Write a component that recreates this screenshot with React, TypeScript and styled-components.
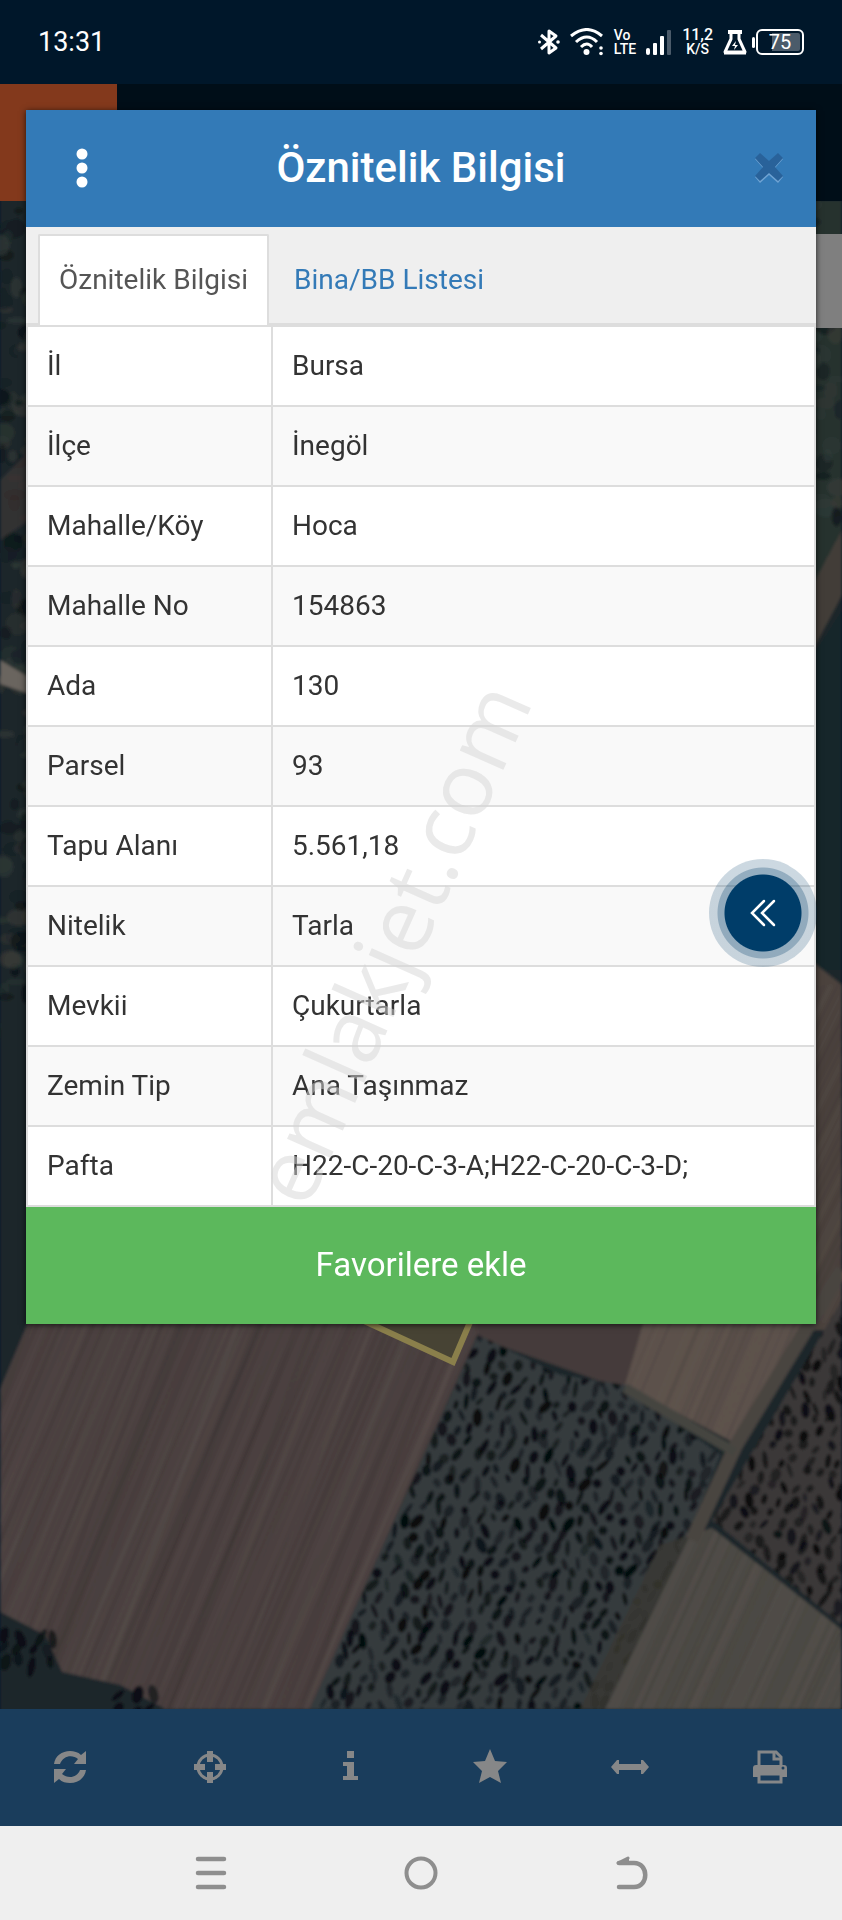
import styled, { createGlobalStyle } from "styled-components";

const GlobalStyle = createGlobalStyle`
  * {
    box-sizing: border-box;
  }

  body {
    margin: 0;
    background: #00172a;
    font-family: Roboto, "Liberation Sans", sans-serif;
    color: #333;
  }

  button {
    padding: 0;
    border: 0;
    background: none;
    font: inherit;
    color: inherit;
    cursor: pointer;
  }

  svg {
    display: block;
  }
`;

const rows = [
  ["İl", "Bursa"],
  ["İlçe", "İnegöl"],
  ["Mahalle/Köy", "Hoca"],
  ["Mahalle No", "154863"],
  ["Ada", "130"],
  ["Parsel", "93"],
  ["Tapu Alanı", "5.561,18"],
  ["Nitelik", "Tarla"],
  ["Mevkii", "Çukurtarla"],
  ["Zemin Tip", "Ana Taşınmaz"],
  ["Pafta", "H22-C-20-C-3-A;H22-C-20-C-3-D;"],
];

// small seeded generator so the map texture is the same on each render
const makeRandom = (seed: number) => {
  let s = seed;
  return () => {
    s = (s * 16807) % 2147483647;
    return s / 2147483647;
  };
};

const treeRows = (
  seed: number,
  x0: number,
  x1: number,
  y0: number,
  y1: number,
  slope: number,
  size: number
) => {
  const rnd = makeRandom(seed);
  const trees = [];
  for (let x = x0; x < x1; x += 15) {
    for (let y = y0; y < y1; y += 13) {
      const cx = x - (y - y0) * slope + rnd() * 7;
      const cy = y + rnd() * 9;
      trees.push(
        <ellipse
          key={`${x}-${y}`}
          cx={cx}
          cy={cy}
          rx={size * (0.4 + rnd() * 0.6)}
          ry={size * (0.8 + rnd() * 1.1)}
          opacity={0.35 + rnd() * 0.65}
          transform={`rotate(${rnd() * 80 - 30} ${cx} ${cy})`}
        />
      );
    }
  }
  return trees;
};

const furrows = (
  seed: number,
  x0: number,
  x1: number,
  y0: number,
  y1: number,
  slope: number,
  step: number
) => {
  const rnd = makeRandom(seed);
  const lines = [];
  for (let x = x0; x < x1; x += step) {
    const dx = (y1 - y0) * slope;
    lines.push(
      <path
        key={x}
        d={`M${x} ${y0} L${x - dx} ${y1}`}
        stroke={rnd() > 0.5 ? "#6d625c" : "#2b2625"}
        strokeWidth={1 + rnd() * step * 0.5}
        opacity={0.06 + rnd() * 0.14}
      />
    );
  }
  return lines;
};

const blotches = (seed: number, x0: number, x1: number, y0: number, y1: number, count: number) => {
  const rnd = makeRandom(seed);
  const colors = ["#0c1418", "#3a3a36", "#141f26", "#2f3a36"];
  return Array.from({ length: count }, (_, i) => (
    <ellipse
      key={i}
      cx={x0 + rnd() * (x1 - x0)}
      cy={y0 + rnd() * (y1 - y0)}
      rx={4 + rnd() * 8}
      ry={3 + rnd() * 8}
      fill={colors[Math.floor(rnd() * 4)]}
      opacity={0.35 + rnd() * 0.4}
    />
  ));
};

const SatelliteMap = () => (
  <MapDrawing viewBox="0 201 842 1508" preserveAspectRatio="xMidYMid slice" aria-hidden="true">
    <defs>
      <filter id="soft" x="0" y="0" width="100%" height="100%">
        <feGaussianBlur stdDeviation="1.4" />
      </filter>
      <clipPath id="plough">
        <path d="M30 1200 H540 L475 1340 L310 1709 H165 L120 1685 L62 1672 L45 1635 L0 1612 V1390 L30 1318Z" />
      </clipPath>
      <clipPath id="orchard">
        <path d="M478 1335 L560 1375 L625 1385 L720 1455 L688 1535 L605 1709 H310Z" />
      </clipPath>
      <clipPath id="east">
        <path d="M842 1300 L712 1520 L842 1625Z" />
      </clipPath>
      <clipPath id="pale">
        <path d="M650 1300 L830 1300 L738 1445 L625 1385Z" />
      </clipPath>
      <clipPath id="south">
        <path d="M690 1535 L712 1528 L842 1630 V1709 H605Z" />
      </clipPath>
    </defs>
    <g filter="url(#soft)">
      <rect x="0" y="190" width="842" height="1530" fill="#1d272a" />
      <g>{blotches(7, 0, 40, 210, 1060, 150)}</g>
      <path d="M0 480 L30 450 V520 L0 540Z" fill="#3d3533" opacity=".7" />
      <path d="M0 660 L30 678 V694 L0 684Z" fill="#6b655f" />
      <path d="M0 1010 H30 V1330 H0Z" fill="#1d262b" />

      <path d="M810 201 H842 V530 L810 600Z" fill="#26332f" />
      <g>{blotches(19, 810, 842, 201, 520, 40)}</g>
      <path d="M842 530 L810 590 V655 L842 595Z" fill="#423c38" />
      <path d="M842 610 L810 660 V970 H842Z" fill="#19272b" />
      <path d="M810 960 L842 985 V1330 H810Z" fill="#4b423e" />
      <g>{furrows(5, 810, 1000, 985, 1323, 0.5, 7)}</g>

      <path d="M30 1200 H540 L475 1340 L310 1709 H165 L120 1685 L62 1672 L45 1635 L0 1612 V1390 L30 1318Z" fill="#4b4140" />
      <g clipPath="url(#plough)">
        {furrows(11, 0, 700, 1300, 1709, 0.43, 8)}
        {furrows(31, 20, 700, 1300, 1709, 0.38, 19)}
      </g>

      <path d="M475 1300 H660 L625 1390 L478 1338Z" fill="#443b3a" />
      <path d="M478 1335 L560 1375 L625 1385 L720 1455 L688 1535 L605 1709 H310Z" fill="#343b3e" />
      <g clipPath="url(#orchard)" fill="#05090d">
        {treeRows(23, 478, 900, 1335, 1715, 0.44, 5)}
      </g>
      <path d="M690 1535 L605 1709 H580 L660 1545Z" fill="#3b3933" opacity=".8" />

      <path d="M650 1300 L830 1300 L738 1445 L625 1385Z" fill="#5c514b" />
      <g clipPath="url(#pale)">{furrows(41, 630, 900, 1300, 1450, 0.42, 5)}</g>

      <path d="M842 1300 L712 1520 L842 1625Z" fill="#3a3737" />
      <g clipPath="url(#east)" fill="#080a0c">
        {treeRows(53, 740, 1000, 1300, 1640, 0.44, 5)}
      </g>

      <path d="M690 1535 L712 1528 L842 1630 V1709 H605Z" fill="#4e4b46" />
      <g clipPath="url(#south)">{furrows(61, 640, 930, 1525, 1709, 0.46, 5)}</g>

      <path d="M842 1270 L736 1445 L692 1540" fill="none" stroke="#4a4440" strokeWidth="14" />
      <path d="M625 1388 L735 1452" stroke="#454540" strokeWidth="10" />

      <path d="M0 1612 L45 1635 L62 1672 L120 1685 L165 1709 H0Z" fill="#1a2529" />
      <g fill="#070d12">{treeRows(71, 4, 50, 1632, 1670, 0.2, 6)}</g>
      <g fill="#070d12">{treeRows(73, 118, 160, 1690, 1712, 0.2, 6)}</g>
    </g>
    <path d="M336 1308 L453 1362 L476 1308" fill="#474334" stroke="#8a7f4b" strokeWidth="6" />
  </MapDrawing>
);

const StatusIcons = () => (
  <Indicators>
    <svg width="22" height="28" viewBox="0 0 22 28" fill="none" stroke="#fff" strokeWidth="3">
      <path d="M3 7 L18 20 L11 25 V3 L18 8 L3 21" strokeLinejoin="round" />
      <circle cx="1.5" cy="14" r="1.5" fill="#fff" stroke="none" />
      <circle cx="20" cy="14" r="1.8" fill="#fff" stroke="none" />
    </svg>
    <svg width="34" height="28" viewBox="0 0 34 28" fill="none" stroke="#fff" strokeWidth="3">
      <path d="M1 8 Q17 -5 32 8" />
      <path d="M6 14 Q17 4 27 14" />
      <path d="M11 19 Q17 13 22 19" />
      <circle cx="16.5" cy="24" r="3" fill="#fff" stroke="none" />
      <circle cx="31" cy="20" r="1.8" fill="#fff" stroke="none" />
      <circle cx="31" cy="25.5" r="1.8" fill="#fff" stroke="none" />
    </svg>
    <Stacked>
      <span>Vo</span>
      <span>LTE</span>
    </Stacked>
    <svg width="26" height="28" viewBox="0 0 26 28" fill="#fff">
      <rect x="0" y="20" width="4" height="7" rx="2" />
      <rect x="7" y="15" width="4" height="12" rx="1" />
      <rect x="14" y="8" width="4" height="19" rx="1" />
      <rect x="21" y="2" width="4" height="25" rx="1" fill="#4b5b6a" />
    </svg>
    <Stacked>
      <strong>11,2</strong>
      <span>K/S</span>
    </Stacked>
    <svg width="24" height="28" viewBox="0 0 24 28" fill="none" stroke="#fff" strokeWidth="3">
      <path d="M5 4 H19" strokeWidth="4" />
      <path d="M8 5 V11 L2 24 H22 L16 11 V5" strokeLinejoin="round" />
      <path d="M1 25 H23" />
      <path d="M13 13 L9 18 H12 L11 22 L15 17 H12Z" fill="#fff" stroke="none" />
    </svg>
    <Battery>
      <BatteryBody>75</BatteryBody>
    </Battery>
  </Indicators>
);

const tools = [
  {
    label: "Yenile",
    icon: (
      <svg width="34" height="34" viewBox="0 0 34 34" fill="#868788">
        <path d="M1 14 C2 6 9 1 17 1 C21 1 25 2 28 5 L33 1 V14 H21 L25 9 C19 4 10 6 7 14Z" />
        <path d="M33 20 C32 28 25 33 17 33 C13 33 9 32 6 29 L1 33 V19 H13 L9 24 C15 29 24 28 27 20Z" />
      </svg>
    ),
  },
  {
    label: "Konum",
    icon: (
      <svg width="34" height="34" viewBox="0 0 34 34" fill="none" stroke="#868788">
        <circle cx="17" cy="17" r="12" strokeWidth="3" />
        <path d="M17 1 V12 M17 22 V33 M1 17 H12 M22 17 H33" strokeWidth="6" />
      </svg>
    ),
  },
  {
    label: "Bilgi",
    icon: (
      <svg width="34" height="34" viewBox="0 0 34 34" fill="#868788">
        <path d="M14 1 H21 V8 H14Z M10 12 H21 V26 H25 V30 H10 V26 H14 V16 H10Z" />
      </svg>
    ),
  },
  {
    label: "Favoriler",
    icon: (
      <svg width="36" height="36" viewBox="0 0 36 36" fill="#868788">
        <path d="M18 0 L23 12 L35 13 L26 22 L29 34 L18 28 L7 34 L10 22 L1 13 L13 12Z" />
      </svg>
    ),
  },
  {
    label: "Ölçüm",
    icon: (
      <svg width="38" height="34" viewBox="0 0 38 34" fill="#868788">
        <path d="M0 17 L6 10 H8 V14 H30 V10 H32 L38 17 L32 24 H30 V20 H8 V24 H6Z" />
      </svg>
    ),
  },
  {
    label: "Yazdır",
    icon: (
      <svg width="36" height="34" viewBox="0 0 36 34" fill="none" stroke="#868788" strokeWidth="3">
        <path d="M7 16 V2 H24 L29 7 V16" />
        <path d="M22 2 V9 H29" />
        <path d="M4 15 H32 Q35 15 35 18 V27 H29 V23 H7 V27 H1 V18 Q1 15 4 15Z" fill="#868788" stroke="none" />
        <rect x="7" y="24" width="22" height="8" fill="#1a3d5c" />
        <circle cx="31" cy="18" r="1.5" fill="#1a3d5c" stroke="none" />
      </svg>
    ),
  },
];

const App = () => (
  <>
    <GlobalStyle />
    <Screen>
      <StatusBar>
        <time>13:31</time>
        <StatusIcons />
      </StatusBar>

      <Shell>
        <Viewer>
          <TopBar>
            <TopBarBadge />
          </TopBar>
          <MapArea>
            <SatelliteMap />
            <MapControl type="button" aria-label="Katmanlar" />
          </MapArea>
          <Toolbar>
            {tools.map((tool) => (
              <button key={tool.label} type="button" aria-label={tool.label}>
                {tool.icon}
              </button>
            ))}
          </Toolbar>
        </Viewer>

        <Overlay>
          <Modal role="dialog" aria-labelledby="modal-title">
            <ModalHeader>
              <MenuButton type="button" aria-label="Menü">
                <svg width="12" height="40" viewBox="0 0 12 40" fill="#fff">
                  <circle cx="6" cy="6" r="5.5" />
                  <circle cx="6" cy="20" r="5.5" />
                  <circle cx="6" cy="34" r="5.5" />
                </svg>
              </MenuButton>
              <Title id="modal-title">Öznitelik Bilgisi</Title>
              <CloseButton type="button" aria-label="Kapat">
                <svg width="30" height="32" viewBox="0 0 30 32">
                  <path d="M6 2 L15 10 L24 2 L29 7 L21 16 L29 25 L24 31 L15 23 L6 31 L1 25 L9 16 L1 7Z" fill="#6fa3d3" />
                  <path d="M6 1 L15 9 L24 1 L29 6 L21 15 L29 24 L24 29 L15 21 L6 29 L1 24 L9 15 L1 6Z" fill="#29629a" />
                </svg>
              </CloseButton>
            </ModalHeader>

            <Tabs role="tablist">
              <Tab type="button" role="tab" aria-selected="true" $active>
                Öznitelik Bilgisi
              </Tab>
              <Tab type="button" role="tab" aria-selected="false">
                Bina/BB Listesi
              </Tab>
            </Tabs>

            <TableArea>
              <Table>
                <tbody>
                  {rows.map(([name, value]) => (
                    <tr key={name}>
                      <th scope="row">{name}</th>
                      <td>{value}</td>
                    </tr>
                  ))}
                </tbody>
              </Table>
              <Watermark>emlakjet.com</Watermark>
            </TableArea>

            <FavoriteButton type="button">Favorilere ekle</FavoriteButton>
          </Modal>
        </Overlay>
      </Shell>

      <NavBar>
        <button type="button" aria-label="Son uygulamalar">
          <svg width="32" height="34" viewBox="0 0 32 34" stroke="#8e8e8e" strokeWidth="4.5" strokeLinecap="round">
            <path d="M3 3 H29 M3 17 H29 M3 31 H29" />
          </svg>
        </button>
        <button type="button" aria-label="Ana ekran">
          <svg width="34" height="34" viewBox="0 0 34 34" fill="none" stroke="#8e8e8e" strokeWidth="4">
            <circle cx="17" cy="17" r="14.5" />
          </svg>
        </button>
        <button type="button" aria-label="Geri">
          <svg width="34" height="34" viewBox="0 0 34 34" fill="none" stroke="#8e8e8e" strokeWidth="4.5" strokeLinecap="round">
            <path d="M4 7 H19 C34 7 34 31 19 31 H4" />
            <path d="M3 7 L13 2" strokeWidth="3" />
            <path d="M3 7 L14 1 V8Z" fill="#8e8e8e" stroke="none" />
          </svg>
        </button>
      </NavBar>

      <FloatingButton type="button" aria-label="Aç">
        <svg width="26" height="28" viewBox="0 0 26 28" fill="none" stroke="#fff" strokeWidth="2.5" strokeLinecap="round">
          <path d="M14 2 L2 14 L14 26" />
          <path d="M24 2 L12 14 L24 26" />
        </svg>
      </FloatingButton>
    </Screen>
  </>
);

export default App;

const Screen = styled.div`
  position: relative;
  display: flex;
  flex-direction: column;
  min-height: 100vh;
`;

const StatusBar = styled.header`
  display: flex;
  align-items: center;
  justify-content: space-between;
  height: 84px;
  padding: 0 38px;
  background: #00172a;
  color: #fff;
  font-size: 27px;
`;

const Indicators = styled.div`
  display: flex;
  align-items: center;
  gap: 10px;
`;

const Stacked = styled.div`
  display: flex;
  flex-direction: column;
  align-items: center;
  font-size: 14px;
  font-weight: 500;
  line-height: 14px;

  span:first-child {
    align-self: flex-start;
  }

  strong {
    font-size: 16px;
    font-weight: 500;
  }
`;

const Battery = styled.div`
  display: flex;
  align-items: center;
  gap: 1px;
  margin-left: -5px;

  &::before {
    content: "";
    width: 3px;
    height: 11px;
    border-radius: 2px;
    background: #fff;
  }
`;

const BatteryBody = styled.span`
  width: 48px;
  height: 26px;
  border: 2px solid #fff;
  border-radius: 6px;
  background: linear-gradient(to right, transparent 12px, #4b5b6a 12px) content-box;
  padding: 2px;
  font-size: 20px;
  line-height: 18px;
  text-align: center;
`;

/* the viewer and the dialog share one grid cell, the dialog on top */
const Shell = styled.main`
  flex: 1;
  display: grid;
  grid-template-columns: minmax(0, 1fr);

  > * {
    grid-area: 1 / 1;
  }
`;

const Viewer = styled.div`
  display: flex;
  flex-direction: column;
`;

const TopBar = styled.div`
  height: 117px;
  background: #000e18;
`;

const TopBarBadge = styled.div`
  width: 117px;
  height: 100%;
  background: #83391c;
`;

const MapArea = styled.div`
  position: relative;
  flex: 1;
  display: flex;
  flex-direction: column;
  align-items: flex-end;
  padding-top: 33px;
  overflow: hidden;
`;

const MapDrawing = styled.svg`
  position: absolute;
  inset: 0;
  width: 100%;
  height: 100%;
`;

const MapControl = styled.button`
  position: relative;
  width: 94px;
  height: 94px;
  background: #7f7f7f;
`;

const Toolbar = styled.div`
  display: grid;
  grid-template-columns: repeat(6, 1fr);
  height: 117px;
  padding-right: 2px;
  padding-bottom: 2px;
  background: #1a3d5c;

  button {
    display: grid;
    place-items: center;
  }
`;

const Overlay = styled.div`
  z-index: 1;
  padding: 26px;
`;

const Modal = styled.section`
  background: #fff;
  box-shadow: 0 1px 6px rgba(0, 0, 0, 0.7);
`;

const ModalHeader = styled.div`
  display: grid;
  grid-template-columns: 112px 1fr 112px;
  align-items: center;
  height: 117px;
  padding-bottom: 2px;
  background: #337ab7;
`;

const MenuButton = styled.button`
  display: grid;
  place-items: center;
  height: 100%;
`;

const CloseButton = styled(MenuButton)`
  justify-self: end;
  width: 94px;
`;

const Title = styled.h1`
  margin: 0;
  color: #fff;
  font-size: 42px;
  font-weight: 500;
  text-align: center;
`;

const Tabs = styled.div`
  display: flex;
  gap: 4px;
  padding: 7px 12px 0;
  border-bottom: 2px solid #ddd;
  background: #efefef;
`;

const Tab = styled.button<{ $active?: boolean }>`
  height: 91px;
  margin-bottom: -2px;
  padding: 0 19px 2px;
  border: 2px solid ${({ $active }) => ($active ? "#ddd" : "transparent")};
  border-bottom: 0;
  border-radius: 2px 2px 0 0;
  background: ${({ $active }) => ($active ? "#fff" : "none")};
  color: ${({ $active }) => ($active ? "#555" : "#337ab7")};
  font-size: 28px;
`;

const TableArea = styled.div`
  position: relative;
`;

const Table = styled.table`
  width: 100%;
  border-collapse: collapse;
  font-size: 28px;
  line-height: 38px;

  tr:nth-child(even) {
    background: #f9f9f9;
  }

  th,
  td {
    padding: 20px 19px;
    border: 2px solid #ddd;
    font-weight: 400;
    text-align: left;
  }

  th {
    width: 245px;
  }
`;

const Watermark = styled.span`
  position: absolute;
  top: 70%;
  left: 46%;
  transform: translate(-50%, -50%) rotate(-66deg);
  color: rgba(214, 214, 214, 0.5);
  font-family: "Open Sans", sans-serif;
  font-size: 89px;
  line-height: 1;
  pointer-events: none;
`;

const FavoriteButton = styled.button`
  display: block;
  width: 100%;
  height: 117px;
  padding-bottom: 2px;
  background: #5cb85c;
  color: #fff;
  font-size: 33px;
`;

const NavBar = styled.nav`
  display: grid;
  grid-template-columns: repeat(3, 1fr);
  height: 94px;
  padding: 0 calc(100% / 8);
  background: #efefef;

  button {
    display: grid;
    place-items: center;
  }
`;

const FloatingButton = styled.button`
  position: absolute;
  top: 859px;
  right: 25px;
  z-index: 2;
  display: grid;
  place-items: center;
  width: 108px;
  height: 108px;
  border: 16px solid transparent;
  border-radius: 50%;
  background: radial-gradient(
      circle,
      #003d69 38px,
      rgba(0, 61, 105, 0.42) 39px,
      rgba(0, 61, 105, 0.42) 45px,
      rgba(0, 61, 105, 0.2) 46px
    )
    border-box;
`;
